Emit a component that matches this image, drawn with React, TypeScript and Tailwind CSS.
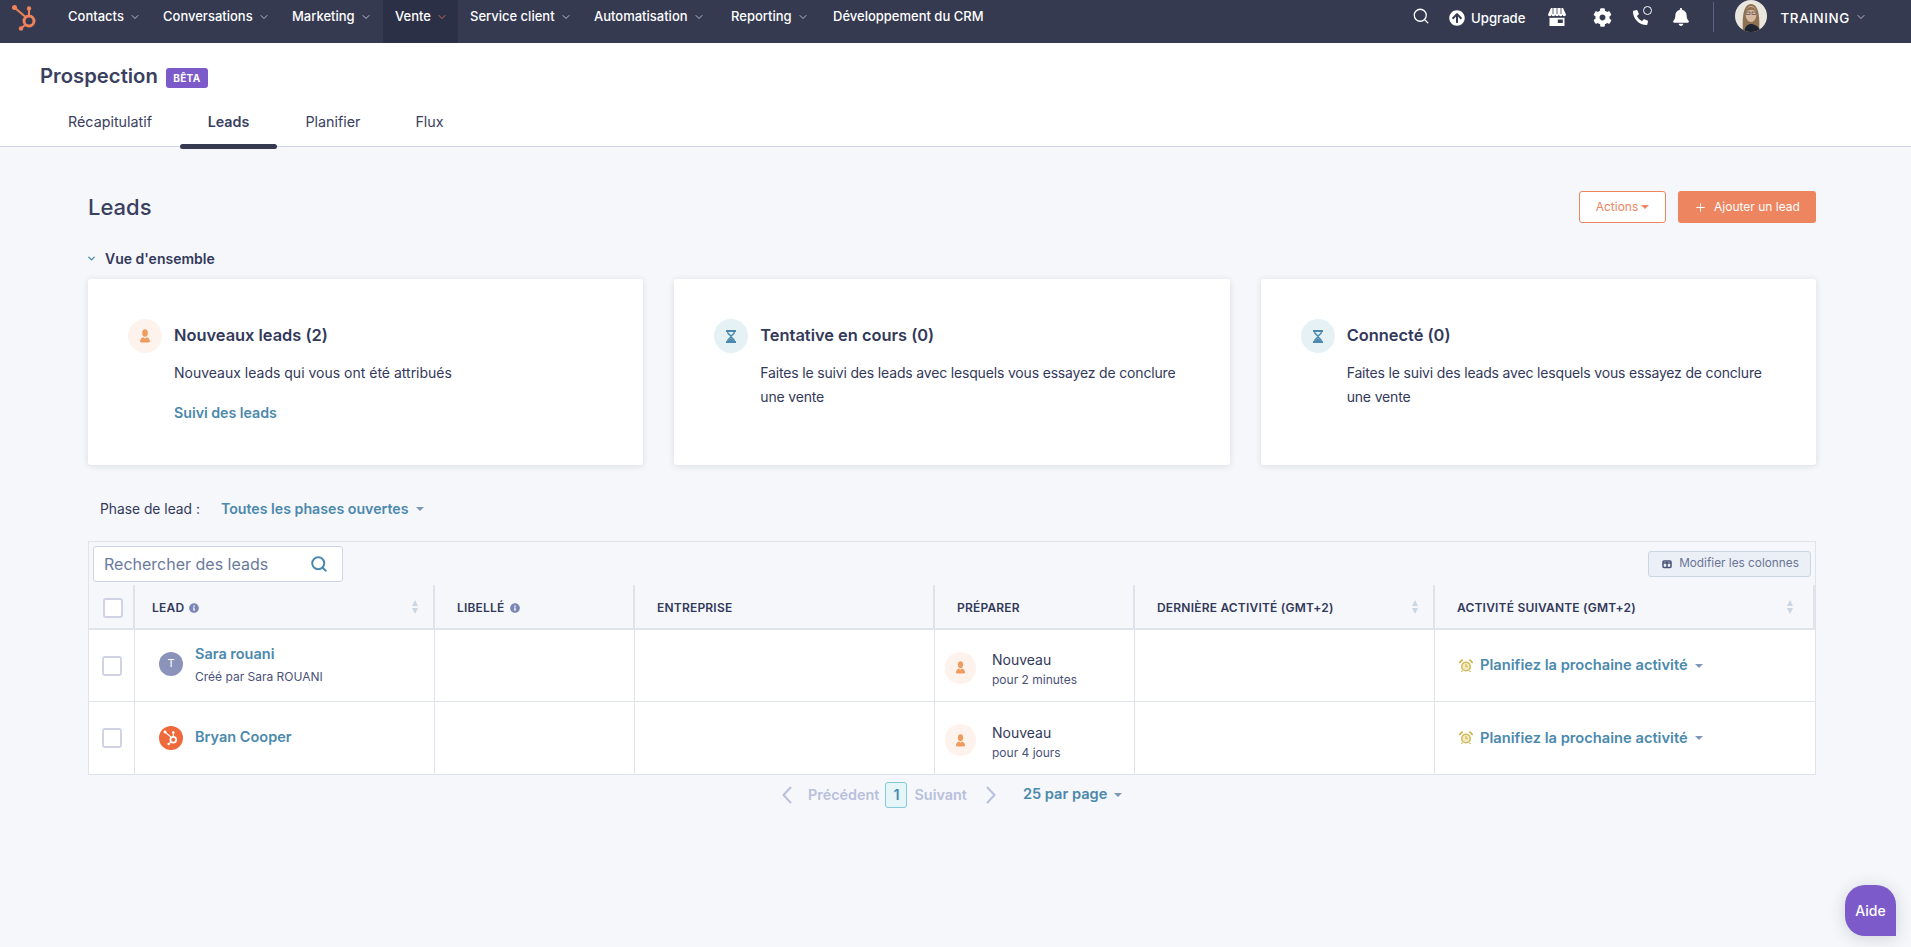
import React from "react";
import { Search, ChevronDown, Plus } from "lucide-react";
import { FaArrowCircleUp, FaCog, FaPhoneAlt, FaBell, FaInfoCircle } from "react-icons/fa";

const navItems = [
  { label: "Contacts", width: "w-[95px]" },
  { label: "Conversations", width: "w-[129px]" },
  { label: "Marketing", width: "w-[103px]" },
  { label: "Vente", width: "w-[75px]", active: true },
  { label: "Service client", width: "w-[124px]" },
  { label: "Automatisation", width: "w-[137px]" },
  { label: "Reporting", width: "w-[102px]" },
  { label: "Développement du CRM", width: "w-[178px]", noChevron: true },
];

const tabs = [
  { label: "Récapitulatif", width: "w-[140px]" },
  { label: "Leads", width: "w-[97px]", active: true },
  { label: "Planifier", width: "w-[112px]" },
  { label: "Flux", width: "w-[81px]" },
];

const gridCols = "grid grid-cols-[46px_300px_200px_300px_200px_300px_1fr]";

const Sprocket = ({ className, color }: { className: string; color: string }) => (
  <svg viewBox="0 0 28 28" className={className} fill="none">
    <circle cx="18" cy="17" r="5" stroke={color} strokeWidth="3" />
    <line x1="18" y1="5" x2="18" y2="11" stroke={color} strokeWidth="2" />
    <circle cx="18" cy="4.5" r="2.2" fill={color} />
    <line x1="4" y1="4" x2="14" y2="12.5" stroke={color} strokeWidth="2" />
    <circle cx="3.5" cy="3.5" r="2.5" fill={color} />
    <line x1="10" y1="24.5" x2="14.5" y2="20.5" stroke={color} strokeWidth="2" />
    <circle cx="10" cy="24.5" r="2.2" fill={color} />
  </svg>
);

const Caret = ({ className }: { className: string }) => (
  <span className={`inline-block w-0 h-0 border-x-[4px] border-x-transparent border-t-[4px] ${className}`} />
);

const PersonIcon = ({ className }: { className: string }) => (
  <svg viewBox="0 0 12 14" className={className} fill="#ef9a5f">
    <ellipse cx="6" cy="4" rx="2.800" ry="3.800" />
    <path d="M1 13c0-2.600 1.500-4.400 3.200-4.800L6 9.400 7.800 8.200C9.500 8.600 11 10.400 11 13c-1.500 0.800-8.500 0.800-10 0z" />
  </svg>
);

const HourglassIcon = () => (
  <svg viewBox="0 0 12 13" className="w-[12px] h-[13px]" fill="none" stroke="#4b89ad" strokeWidth="1.400">
    <path d="M1 1h10M1 12h10" strokeWidth="1.800" />
    <path d="M2.500 1.500c0 3 3.500 3.500 3.500 5s-3.500 2-3.500 5M9.500 1.500c0 3-3.500 3.500-3.500 5s3.500 2 3.500 5" />
    <path d="M3 11.500c0.500-2 2-2.500 3-3.500 1 1 2.500 1.500 3 3.500z" fill="#4b89ad" stroke="none" />
  </svg>
);

const AlarmIcon = () => (
  <svg viewBox="0 0 14 14" className="w-[14px] h-[14px]" fill="none" stroke="#d1bb5a">
    <circle cx="7" cy="7.500" r="4.300" strokeWidth="1.600" fill="#f3ecc4" />
    <path d="M7 5v2.700h2" strokeWidth="1.200" />
    <path d="M0.800 3.400 3 1.200M13.200 3.400 11 1.200" strokeWidth="2" strokeLinecap="round" />
    <path d="M3.500 11.500 2.500 13M10.500 11.500l1 1.500" strokeWidth="1.200" />
  </svg>
);

const StoreIcon = () => (
  <svg viewBox="0 0 18 18" className="w-[18px] h-[18px]" fill="#ffffff">
    <path d="M3 0h12l3 6.500a1.800 1.800 0 0 1-3.600 0 1.800 1.800 0 0 1-3.600 0 1.800 1.800 0 0 1-3.600 0 1.800 1.800 0 0 1-3.600 0A1.800 1.800 0 0 1 0 6.500z" />
    <path d="M1.500 9.800h15V18h-15z" />
    <path d="M9.800 11.500h5v3.500h-5z" fill="#353a51" />
    <path d="M5 0v6M9 0v6M13 0v6" stroke="#353a51" strokeWidth="0.8" />
  </svg>
);

const PagerChevron = ({ points }: { points: string }) => (
  <svg viewBox="0 0 10 18" className="w-[10px] h-[18px]" fill="none" stroke="#b9c0dc" strokeWidth="2">
    <polyline points={points} />
  </svg>
);

const SortArrows = () => (
  <span className="flex flex-col gap-[2px] items-center">
    <span className="w-0 h-0 border-x-[3.5px] border-x-transparent border-b-[6px] border-b-[#cbd6e2]" />
    <span className="w-0 h-0 border-x-[3.5px] border-x-transparent border-t-[6px] border-t-[#cbd6e2]" />
  </span>
);

const Checkbox = () => (
  <span className="block w-[20px] h-[20px] bg-white border-2 border-[#cfd3e3] rounded-[3px]" />
);

const Avatar = () => (
  <svg viewBox="0 0 32 32" className="w-[32px] h-[32px] rounded-full">
    <rect width="32" height="32" fill="#e8e6dd" />
    <path d="M8 32c-1-14 0-28 8-28s9 14 8 28z" fill="#8d7150" />
    <ellipse cx="16" cy="14" rx="5.500" ry="8" fill="#d9b8a2" />
    <path d="M10.500 12c1-6 9-7 11 0-3-3-7-3-11 0z" fill="#8d7150" />
    <rect x="11" y="12" width="4" height="2.500" fill="none" stroke="#3a3a3a" strokeWidth="0.6" />
    <rect x="17" y="12" width="4" height="2.500" fill="none" stroke="#3a3a3a" strokeWidth="0.6" />
    <path d="M9 32c1-6 4-8 7-8s8 2 10 8z" fill="#1f2433" />
  </svg>
);

const OverviewCard = ({
  title,
  desc,
  link,
  tone,
}: {
  title: string;
  desc: React.ReactNode;
  link?: string;
  tone: "orange" | "blue";
}) => (
  <div className="h-[186px] bg-white rounded-[3px] shadow-[0_1px_6px_rgba(45,62,80,0.14)] pt-[40px] pl-[40px] pr-[40px] flex gap-[12px]">
    {tone === "orange" ? (
      <span className="w-[34px] h-[34px] shrink-0 rounded-full bg-[#fdf3ec] flex items-center justify-center">
        <PersonIcon className="w-[12px] h-[14px]" />
      </span>
    ) : (
      <span className="w-[34px] h-[34px] shrink-0 rounded-full bg-[#e5f1f5] flex items-center justify-center">
        <HourglassIcon />
      </span>
    )}
    <div className="flex-1">
      <div className="h-[32px] flex items-center text-[16.4px] font-semibold text-[#33395a]">{title}</div>
      <p className="mt-[10px] text-[14px] leading-[24px] text-[#33395a]">{desc}</p>
      {link && <a className="block mt-[18px] text-[14.2px] leading-[20px] font-semibold text-[#4b89ad]">{link}</a>}
    </div>
  </div>
);

const HeaderCell = ({
  label,
  info,
  sort,
  pad,
  sortPad,
}: {
  label: string;
  info?: boolean;
  sort?: boolean;
  pad: string;
  sortPad?: string;
}) => (
  <div className={`h-[45px] pt-[3px] flex items-center ${pad} ${sortPad ?? "pr-[15px]"} bg-[#f5f7fa] border-r-2 border-b-2 border-[#dfe3eb]`}>
    <span className="text-[12px] font-semibold tracking-[0.2px] text-[#33395a]">{label}</span>
    {info && <FaInfoCircle className="ml-[5px] text-[10px] text-[#7c86b4]" />}
    {sort && (
      <span className="ml-auto -mt-[3px]">
        <SortArrows />
      </span>
    )}
  </div>
);

const LeadRow = ({
  name,
  sub,
  avatar,
  when,
  last,
}: {
  name: string;
  sub?: string;
  avatar: React.ReactNode;
  when: string;
  last?: boolean;
}) => {
  const cell = `border-r border-[#dfe3eb] ${last ? "" : "border-b"} h-[72px]`;
  return (
    <div className={gridCols}>
      <div className={`${cell} flex items-center pl-[13px]`}>
        <Checkbox />
      </div>
      <div className={`${cell} flex items-center pl-[24px] gap-[12px]`}>
        {avatar}
        <div className="flex flex-col mt-[2px]">
          <a className="text-[14.5px] leading-[18px] font-semibold text-[#4b89ad] -translate-y-[2px]">{name}</a>
          {sub && <span className="text-[12px] leading-[18px] text-[#4a5178] mt-[3px]">{sub}</span>}
        </div>
      </div>
      <div className={cell} />
      <div className={cell} />
      <div className={`${cell} flex items-center pl-[10px] gap-[16px] pt-[6px]`}>
        <span className="w-[31px] h-[32px] rounded-full bg-[#fdf3ec] flex items-center justify-center -translate-y-[1px]">
          <PersonIcon className="w-[11px] h-[13px]" />
        </span>
        <div className="flex flex-col translate-y-[1px]">
          <span className="text-[14px] leading-[19px] text-[#33395a]">Nouveau</span>
          <span className="text-[12px] leading-[18px] mt-[2px] text-[#4a5178]">{when}</span>
        </div>
      </div>
      <div className={cell} />
      <div className={`${last ? "" : "border-b"} border-[#dfe3eb] h-[72px] flex items-center pl-[24px]`}>
        <AlarmIcon />
        <span className="ml-[7px] text-[14.7px] font-semibold text-[#4b89ad]">Planifiez la prochaine activité</span>
        <Caret className="ml-[7px] border-t-[#7c98b6]" />
      </div>
    </div>
  );
};

const App = () => {
  return (
    <div className="relative min-h-[947px] bg-[#f5f7fa] font-['Inter','Noto_Sans',sans-serif] overflow-hidden">
      {/* top nav */}
      <header className="h-[43px] bg-[#353a51] flex text-white">
        <div className="w-[56px] pl-[11px] pt-[4px]">
          <Sprocket className="w-[28px] h-[28px]" color="#f0825a" />
        </div>
        <nav className="flex flex-1">
          {navItems.map((item) => (
            <div
              key={item.label}
              className={`${item.width} h-full pl-[12px] pb-[9px] flex items-center gap-[5px] text-[13px] font-medium ${
                item.active ? "bg-[#2c3046]" : ""
              }`}
            >
              <span className="whitespace-nowrap">{item.label}</span>
              {!item.noChevron && (
                <ChevronDown size={12} strokeWidth={1.5} className={item.active ? "text-[#f0825a]" : "text-[#e2e5f0]"} />
              )}
            </div>
          ))}
        </nav>
        <div className="w-[498px] flex items-start pt-[7px] shrink-0">
          <Search size={18} strokeWidth={1.7} className="ml-[-1px]" />
          <FaArrowCircleUp className="ml-[19px] mt-[3px] text-[16px]" />
          <span className="ml-[6px] mt-[2px] text-[13.2px] font-medium">Upgrade</span>
          <span className="ml-[22px] mt-[1px]">
            <StoreIcon />
          </span>
          <FaCog className="ml-[27px] mt-[1px] text-[19px]" />
          <span className="relative ml-[21px] mt-[1px]">
            <FaPhoneAlt className="text-[15px] mt-[2px]" />
            <span className="absolute -top-[2px] left-[10px] w-[9px] h-[9px] rounded-full border border-white bg-[#353a51]" />
          </span>
          <FaBell className="ml-[24px] mt-[1px] text-[18px]" />
          <span className="ml-[23px] -mt-[5px] w-px h-[30px] bg-[#5c6284]" />
          <span className="ml-[21px] -mt-[7px]">
            <Avatar />
          </span>
          <span className="ml-[14px] mt-[1px] text-[13.4px] font-medium tracking-[0.6px]">TRAINING</span>
          <ChevronDown size={12} strokeWidth={1.5} className="ml-[5px] mt-[4px] text-[#e2e5f0]" />
        </div>
      </header>

      {/* page title and tabs */}
      <section className="relative h-[104px] bg-white border-b border-[#cfd6e8] pl-[40px] pt-[19px]">
        <div className="flex items-center h-[28px]">
          <h1 className="text-[20.3px] font-semibold text-[#3a4060]">Prospection</h1>
          <span className="ml-[8px] mt-[4px] w-[42px] h-[20px] rounded-[3px] bg-[#7c5ac9] text-white text-[10px] font-bold flex items-center justify-center tracking-[0.3px]">
            BÊTA
          </span>
        </div>
        <div className="flex mt-[9px]">
          {tabs.map((tab) => (
            <div
              key={tab.label}
              className={`relative ${tab.width} h-[45px] flex items-center justify-center text-[14.3px] text-[#3a4060] ${
                tab.active ? "font-semibold" : ""
              }`}
            >
              {tab.label}
              {tab.active && <span className="absolute -bottom-[5px] left-0 right-0 h-[5px] rounded-[3px] bg-[#353a51]" />}
            </div>
          ))}
        </div>
      </section>

      <main className="pl-[88px] pr-[95px] pt-[44px]">
        <div className="flex items-center justify-between h-[32px]">
          <h2 className="text-[22px] font-medium text-[#3a4060]">Leads</h2>
          <div className="flex gap-[12px]">
            <button className="w-[87px] h-[32px] rounded-[3px] bg-white border border-[#ed8560] text-[#ed8560] text-[12px] flex items-center justify-center gap-[3px]">
              Actions
              <Caret className="border-t-[#ed8560]" />
            </button>
            <button className="w-[138px] h-[32px] rounded-[3px] bg-[#ed8560] text-white text-[12px] flex items-center justify-center gap-[7px]">
              <Plus size={13} strokeWidth={1.8} />
              Ajouter un lead
            </button>
          </div>
        </div>

        <div className="mt-[25px] h-[20px] flex items-center gap-[8px]">
          <ChevronDown size={11} strokeWidth={3} className="-ml-[2px] text-[#4b89ad]" />
          <span className="text-[14px] font-semibold text-[#33395a]">Vue d'ensemble</span>
        </div>

        <div className="mt-[11px] grid grid-cols-3 gap-[31px]">
          <OverviewCard
            tone="orange"
            title="Nouveaux leads (2)"
            desc="Nouveaux leads qui vous ont été attribués"
            link="Suivi des leads"
          />
          <OverviewCard
            tone="blue"
            title="Tentative en cours (0)"
            desc={
              <span className="tracking-[-0.17px]">
                Faites le suivi des leads avec lesquels vous essayez de conclure
                <br />
                une vente
              </span>
            }
          />
          <OverviewCard
            tone="blue"
            title="Connecté (0)"
            desc={
              <span className="tracking-[-0.17px]">
                Faites le suivi des leads avec lesquels vous essayez de conclure
                <br />
                une vente
              </span>
            }
          />
        </div>

        <div className="mt-[34px] h-[20px] flex items-center pl-[12px] text-[13.8px] text-[#33395a]">
          <span>Phase de lead :</span>
          <span className="ml-[21px] text-[14.2px] font-semibold text-[#4b89ad]">Toutes les phases ouvertes</span>
          <Caret className="ml-[7px] border-t-[#7c98b6]" />
        </div>

        {/* table */}
        <div className="mt-[22px] border border-[#dfe3eb]">
          <div className="h-[43px] flex items-center justify-between pl-[4px] pr-[4px] pt-[1px]">
            <div className="w-[250px] h-[36px] bg-white border border-[#cbd6e2] rounded-[3px] flex items-center pl-[10px] pr-[14px] justify-between">
              <span className="text-[16px] text-[#6a7a9c]">Rechercher des leads</span>
              <Search size={18} strokeWidth={2.6} className="text-[#4b89ad]" />
            </div>
            <button className="w-[163px] h-[26px] pl-[2px] bg-[#eaf0f6] border border-[#cbd6e2] rounded-[3px] flex items-center justify-center gap-[7px] text-[11.8px] text-[#6a7396]">
              <svg viewBox="0 0 10 10" className="w-[10px] h-[10px]" fill="none" stroke="#4a5178" strokeWidth="1.500">
                <rect x="1" y="2" width="8" height="6.500" rx="1" />
                <path d="M5 2.500v6M1 4h8" />
              </svg>
              Modifier les colonnes
            </button>
          </div>

          <div className={gridCols}>
            <div className="h-[45px] pt-[3px] flex items-center pl-[14px] bg-[#f5f7fa] border-r-2 border-b-2 border-[#dfe3eb]">
              <Checkbox />
            </div>
            <HeaderCell label="LEAD" info sort pad="pl-[17px]" />
            <HeaderCell label="LIBELLÉ" info pad="pl-[22px]" />
            <HeaderCell label="ENTREPRISE" pad="pl-[22px]" />
            <HeaderCell label="PRÉPARER" pad="pl-[22px]" />
            <HeaderCell label="DERNIÈRE ACTIVITÉ (GMT+2)" sort pad="pl-[22px]" />
            <HeaderCell label="ACTIVITÉ SUIVANTE (GMT+2)" sort pad="pl-[22px]" sortPad="pr-[20px]" />
          </div>

          <div className="bg-white">
            <LeadRow
              name="Sara rouani"
              sub="Créé par Sara ROUANI"
              when="pour 2 minutes"
              avatar={
                <span className="w-[24px] h-[24px] rounded-full bg-[#8b93bb] text-white text-[11px] flex items-center justify-center -translate-y-[2px]">
                  T
                </span>
              }
            />
            <LeadRow
              name="Bryan Cooper"
              when="pour 4 jours"
              last
              avatar={
                <span className="w-[24px] h-[24px] rounded-full bg-[#ee6a3c] flex items-center justify-center">
                  <Sprocket className="w-[16px] h-[16px]" color="#ffffff" />
                </span>
              }
            />
          </div>
        </div>

        {/* pagination */}
        <div className="mt-[7px] flex items-center h-[26px] pl-[694px] text-[14.4px] font-semibold">
          <PagerChevron points="9,1 1.500,9 9,17" />
          <span className="ml-[16px] text-[#b9c0dc]">Précédent</span>
          <span className="ml-[6px] w-[22px] h-[26px] rounded-[3px] bg-[#e5f5f8] border border-[#81c9dc] text-[#4b89ad] flex items-center justify-center">
            1
          </span>
          <span className="ml-[7px] text-[#b9c0dc]">Suivant</span>
          <span className="ml-[19px]">
            <PagerChevron points="1,1 8.500,9 1,17" />
          </span>
          <span className="ml-[27px] text-[14.6px] text-[#4b89ad]">25 par page</span>
          <Caret className="ml-[7px] border-t-[#7c98b6]" />
        </div>
      </main>

      {/* help widget */}
      <div className="absolute left-[1845px] top-[885px] w-[51px] h-[51px] bg-[#7c5ac9] rounded-[20px] rounded-br-none shadow-[0_2px_16px_rgba(45,62,80,0.2)] text-white text-[14px] font-medium flex items-center justify-center">
        Aide
      </div>
    </div>
  );
};

export default App;
